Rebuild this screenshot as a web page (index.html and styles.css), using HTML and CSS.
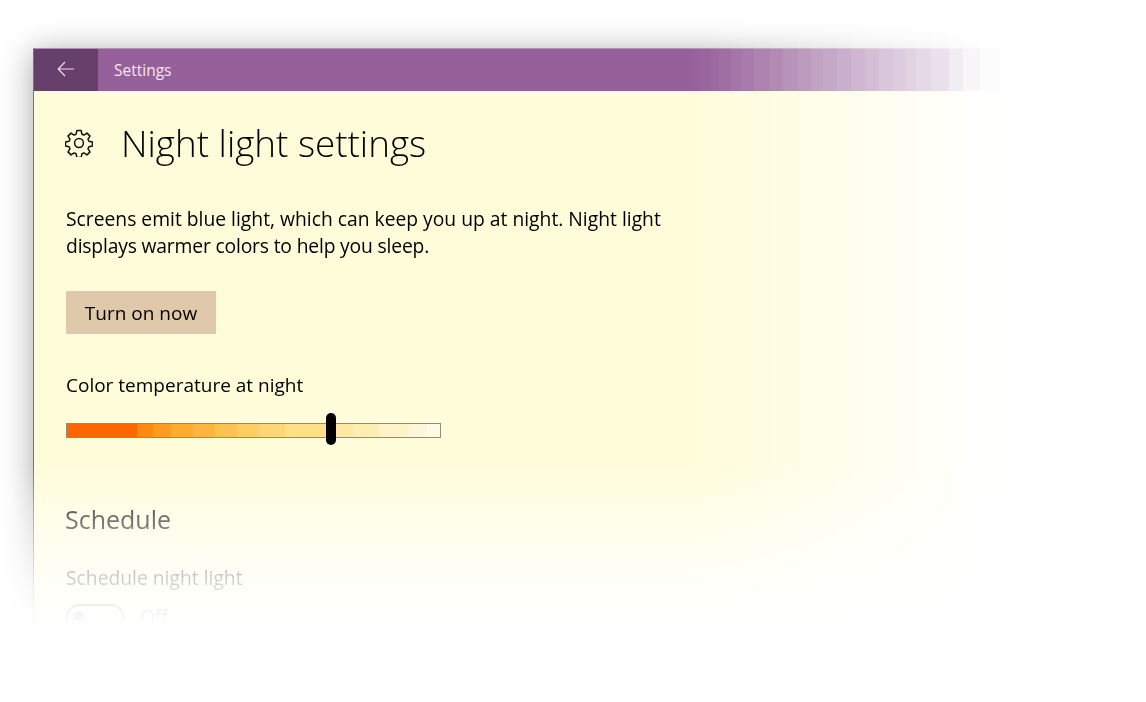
FILE: index.html
```html
<!DOCTYPE html>
<html lang="en">
<head>
<meta charset="utf-8">
<title>Night light settings</title>
<link rel="stylesheet" href="styles.css">
</head>
<body>
<div class="stage">
  <div class="window">
    <header class="titlebar">
      <div class="back">
        <svg class="back-icon" width="18" height="16" viewBox="0 0 18 16" fill="none" stroke="#f1dbe6" stroke-width="1.2"><path d="M17 8H1.2M8 1 1.2 8 8 15"/></svg>
      </div>
      <div class="app-name">Settings</div>
    </header>
    <main class="content">
      <div class="heading">
        <svg class="gear" width="28" height="28" viewBox="0 0 28 28" fill="none" stroke="#111" stroke-width="1.5" stroke-linejoin="round"><path d="M11.8 1.6h4.4l.7 3.6 2 .9 3.1-2 3 3-2 3.1.9 2 3.6.7v4.2l-3.6.7-.9 2 2 3.1-3 3-3.1-2-2 .9-.7 3.6h-4.4l-.7-3.6-2-.9-3.1 2-3-3 2-3.1-.9-2-3.6-.7v-4.2l3.6-.7.9-2-2-3.1 3-3 3.1 2 2-.9z"/><circle cx="14" cy="14" r="4.4"/></svg>
        <h1 class="title">Night light settings</h1>
      </div>
      <p class="intro">Screens emit blue light, which can keep you up at night. Night light <span class="intro-tail">displays warmer colors to help you sleep.</span></p>
      <button class="action">Turn on now</button>
      <div class="slider-label">Color temperature at night</div>
      <div class="slider"><span class="thumb"></span></div>
      <h2 class="section">Schedule</h2>
      <div class="field-label">Schedule night light</div>
      <div class="toggle-row">
        <span class="toggle"><span class="knob"></span></span>
        <span class="toggle-text">Off</span>
      </div>
    </main>
  </div>
</div>
</body>
</html>
```
FILE: styles.css
```css
* { box-sizing: border-box; }
html, body { margin: 0; height: 100%; background: #fff; }
body { font-family: "Open Sans", "Noto Sans", sans-serif; color: #000; overflow: hidden; }

.stage {
  width: 1146px;
  height: 702px;
  padding: 48px 0 0 33px;
  overflow: hidden;
  -webkit-mask-image:
    linear-gradient(to right,
      #000 0 692px, rgba(0,0,0,.985) 692px 702px, rgba(0,0,0,.965) 702px 711px, rgba(0,0,0,.94) 711px 719px,
      rgba(0,0,0,.91) 719px 731px, rgba(0,0,0,.87) 731px 742px, rgba(0,0,0,.83) 742px 754px, rgba(0,0,0,.78) 754px 770px,
      rgba(0,0,0,.73) 770px 783px, rgba(0,0,0,.68) 783px 798px, rgba(0,0,0,.63) 798px 811px, rgba(0,0,0,.59) 811px 823px,
      rgba(0,0,0,.55) 823px 837px, rgba(0,0,0,.5) 837px 851px, rgba(0,0,0,.45) 851px 865px, rgba(0,0,0,.41) 865px 879px,
      rgba(0,0,0,.36) 879px 893px, rgba(0,0,0,.32) 893px 905px, rgba(0,0,0,.28) 905px 916px, rgba(0,0,0,.24) 916px 931px,
      rgba(0,0,0,.19) 931px 949px, rgba(0,0,0,.12) 949px 963px, rgba(0,0,0,.06) 963px 980px, rgba(0,0,0,.02) 980px 1000px,
      transparent 1000px),
    linear-gradient(to bottom, #000 0 465px, rgba(0,0,0,.55) 520px, rgba(0,0,0,.2) 578px, rgba(0,0,0,.05) 612px, transparent 628px);
  mask-image:
    linear-gradient(to right,
      #000 0 692px, rgba(0,0,0,.985) 692px 702px, rgba(0,0,0,.965) 702px 711px, rgba(0,0,0,.94) 711px 719px,
      rgba(0,0,0,.91) 719px 731px, rgba(0,0,0,.87) 731px 742px, rgba(0,0,0,.83) 742px 754px, rgba(0,0,0,.78) 754px 770px,
      rgba(0,0,0,.73) 770px 783px, rgba(0,0,0,.68) 783px 798px, rgba(0,0,0,.63) 798px 811px, rgba(0,0,0,.59) 811px 823px,
      rgba(0,0,0,.55) 823px 837px, rgba(0,0,0,.5) 837px 851px, rgba(0,0,0,.45) 851px 865px, rgba(0,0,0,.41) 865px 879px,
      rgba(0,0,0,.36) 879px 893px, rgba(0,0,0,.32) 893px 905px, rgba(0,0,0,.28) 905px 916px, rgba(0,0,0,.24) 916px 931px,
      rgba(0,0,0,.19) 931px 949px, rgba(0,0,0,.12) 949px 963px, rgba(0,0,0,.06) 963px 980px, rgba(0,0,0,.02) 980px 1000px,
      transparent 1000px),
    linear-gradient(to bottom, #000 0 465px, rgba(0,0,0,.55) 520px, rgba(0,0,0,.2) 578px, rgba(0,0,0,.05) 612px, transparent 628px);
  -webkit-mask-composite: source-in;
  mask-composite: intersect;
}

.window {
  width: 1040px;
  height: 572px;
  overflow: hidden;
  border-left: 1px solid #96609a;
  border-top: 1px solid #b590b5;
  background: #fffdd9;
  box-shadow: 0 4px 30px rgba(0,0,0,.36);
}

.titlebar { display: flex; align-items: center; height: 42px; background: #96609a; }
.back { display: flex; align-items: center; justify-content: center; width: 64px; height: 100%; padding-bottom: 3px; background: #673f6b; }
.app-name { margin-left: 16px; font-size: 15.5px; color: #f7e7ef; }

.content { padding: 0 32px; }
.heading { display: flex; align-items: center; height: 106px; padding-bottom: 2px; }
.gear { margin-left: -1px; flex: none; }
.title { margin: 0 0 0 28px; font-size: 36.8px; font-weight: 300; line-height: 46px; white-space: nowrap; }
.intro { width: 610px; margin: 8px 0 0; font-size: 19.3px; line-height: 27px; }
.intro-tail { letter-spacing: -.17px; }
.action { display: block; width: 150px; height: 43px; margin-top: 32px; padding: 0; border: 0; background: #e0c9aa; font: inherit; font-size: 19px; color: #000; }
.slider-label { margin-top: 38px; font-size: 19px; line-height: 27px; }
.slider {
  position: relative;
  width: 375px;
  height: 15px;
  margin-top: 24px;
  border: 1px solid #9a8a6e;
  background: linear-gradient(to right,
    #ff6600 0 70px, #ff8a10 70px 86px, #ff9c20 86px 104px, #ffab2e 104px 126px, #ffb63f 126px 148px,
    #ffc250 148px 170px, #ffcd62 170px 192px, #ffd675 192px 218px, #ffdf8a 218px 262px, #ffe8a2 262px 286px,
    #ffeeb4 286px 312px, #fff3c8 312px 342px, #fcf6da 342px 360px, #fffce6 360px);
}
.thumb { position: absolute; left: 259px; top: -11px; width: 10px; height: 32px; border-radius: 5px; background: #000; }
.section { margin: 63px 0 0 -1px; font-size: 25px; font-weight: 400; line-height: 36px; }
.field-label { margin-top: 27px; font-size: 19.3px; line-height: 27px; }
.toggle-row { display: flex; align-items: center; gap: 16px; margin-top: 13px; }
.toggle { display: block; width: 58px; height: 26px; padding: 5px; border: 2px solid #333; border-radius: 13px; }
.knob { display: block; width: 12px; height: 12px; border-radius: 50%; background: #333; }
.toggle-text { font-size: 19.3px; line-height: 26px; }
```
